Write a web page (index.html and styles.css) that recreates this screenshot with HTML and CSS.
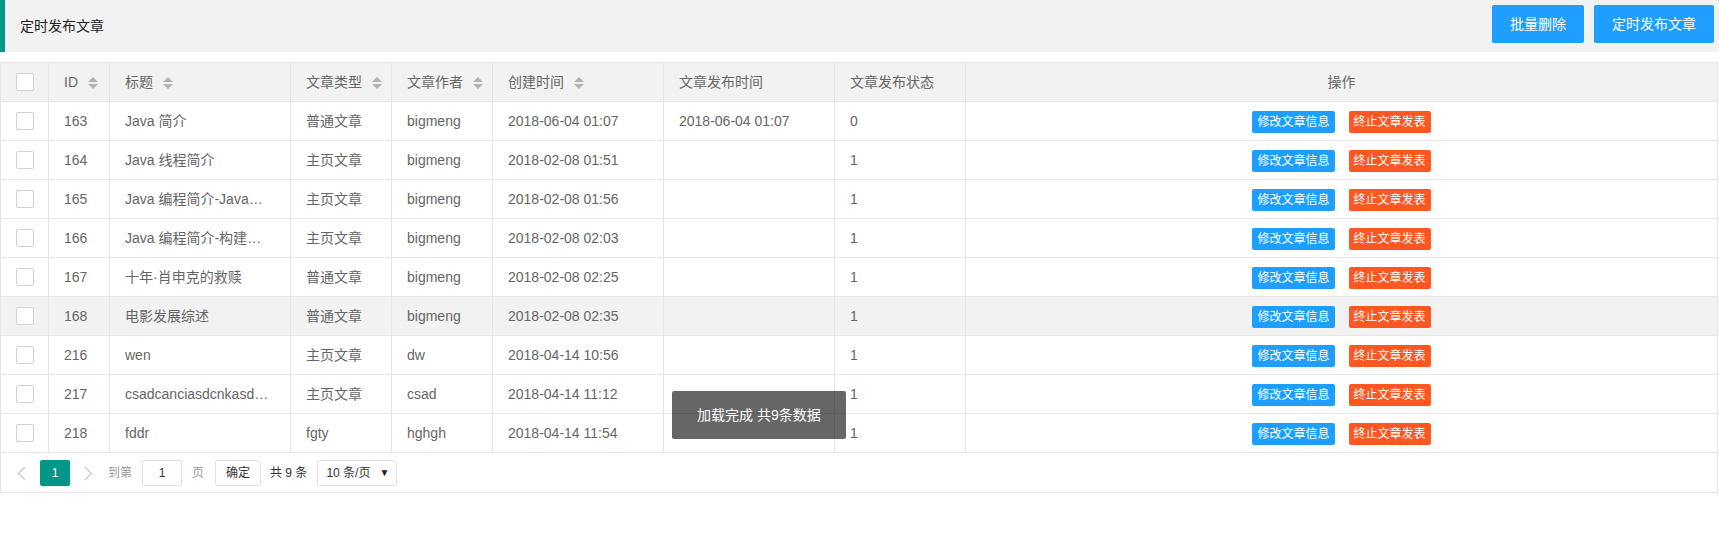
FILE: index.html
```html
<!DOCTYPE html>
<html lang="zh-CN">
<head>
<meta charset="utf-8">
<title>定时发布文章</title>
<link rel="stylesheet" href="styles.css">
</head>
<body>
<div class="quote">
  <div class="quote-title">定时发布文章</div>
  <div class="quote-actions">
    <button class="btn">批量删除</button>
    <button class="btn">定时发布文章</button>
  </div>
</div>

<div class="grid">
  <table>
    <colgroup>
      <col class="c-check"><col class="c-id"><col class="c-title"><col class="c-type"><col class="c-author"><col class="c-created"><col class="c-pub"><col class="c-state"><col>
    </colgroup>
    <thead>
      <tr>
        <th><div class="cell cell-check"><span class="checkbox"></span></div></th>
        <th><div class="cell cell-head">ID<span class="sort"><svg width="10" height="20" viewBox="0 0 10 20"><polygon points="0,10 5,5 10,10" fill="#b2b2b2"/><polygon points="0,12 5,17 10,12" fill="#b2b2b2"/></svg></span></div></th>
        <th><div class="cell cell-head">标题<span class="sort"><svg width="10" height="20" viewBox="0 0 10 20"><polygon points="0,10 5,5 10,10" fill="#b2b2b2"/><polygon points="0,12 5,17 10,12" fill="#b2b2b2"/></svg></span></div></th>
        <th><div class="cell cell-head">文章类型<span class="sort"><svg width="10" height="20" viewBox="0 0 10 20"><polygon points="0,10 5,5 10,10" fill="#b2b2b2"/><polygon points="0,12 5,17 10,12" fill="#b2b2b2"/></svg></span></div></th>
        <th><div class="cell cell-head">文章作者<span class="sort"><svg width="10" height="20" viewBox="0 0 10 20"><polygon points="0,10 5,5 10,10" fill="#b2b2b2"/><polygon points="0,12 5,17 10,12" fill="#b2b2b2"/></svg></span></div></th>
        <th><div class="cell cell-head">创建时间<span class="sort"><svg width="10" height="20" viewBox="0 0 10 20"><polygon points="0,10 5,5 10,10" fill="#b2b2b2"/><polygon points="0,12 5,17 10,12" fill="#b2b2b2"/></svg></span></div></th>
        <th><div class="cell cell-head">文章发布时间</div></th>
        <th><div class="cell cell-head">文章发布状态</div></th>
        <th><div class="cell cell-head cell-center">操作</div></th>
      </tr>
    </thead>
    <tbody>
      <tr>
        <td><div class="cell cell-check"><span class="checkbox"></span></div></td>
        <td><div class="cell">163</div></td>
        <td><div class="cell">Java 简介</div></td>
        <td><div class="cell">普通文章</div></td>
        <td><div class="cell">bigmeng</div></td>
        <td><div class="cell">2018-06-04 01:07</div></td>
        <td><div class="cell">2018-06-04 01:07</div></td>
        <td><div class="cell">0</div></td>
        <td><div class="cell cell-ops"><a class="xbtn xbtn-blue">修改文章信息</a><a class="xbtn xbtn-red">终止文章发表</a></div></td>
      </tr>
      <tr>
        <td><div class="cell cell-check"><span class="checkbox"></span></div></td>
        <td><div class="cell">164</div></td>
        <td><div class="cell">Java 线程简介</div></td>
        <td><div class="cell">主页文章</div></td>
        <td><div class="cell">bigmeng</div></td>
        <td><div class="cell">2018-02-08 01:51</div></td>
        <td><div class="cell"></div></td>
        <td><div class="cell">1</div></td>
        <td><div class="cell cell-ops"><a class="xbtn xbtn-blue">修改文章信息</a><a class="xbtn xbtn-red">终止文章发表</a></div></td>
      </tr>
      <tr>
        <td><div class="cell cell-check"><span class="checkbox"></span></div></td>
        <td><div class="cell">165</div></td>
        <td><div class="cell">Java 编程简介-Java基础</div></td>
        <td><div class="cell">主页文章</div></td>
        <td><div class="cell">bigmeng</div></td>
        <td><div class="cell">2018-02-08 01:56</div></td>
        <td><div class="cell"></div></td>
        <td><div class="cell">1</div></td>
        <td><div class="cell cell-ops"><a class="xbtn xbtn-blue">修改文章信息</a><a class="xbtn xbtn-red">终止文章发表</a></div></td>
      </tr>
      <tr>
        <td><div class="cell cell-check"><span class="checkbox"></span></div></td>
        <td><div class="cell">166</div></td>
        <td><div class="cell">Java 编程简介-构建工具</div></td>
        <td><div class="cell">主页文章</div></td>
        <td><div class="cell">bigmeng</div></td>
        <td><div class="cell">2018-02-08 02:03</div></td>
        <td><div class="cell"></div></td>
        <td><div class="cell">1</div></td>
        <td><div class="cell cell-ops"><a class="xbtn xbtn-blue">修改文章信息</a><a class="xbtn xbtn-red">终止文章发表</a></div></td>
      </tr>
      <tr>
        <td><div class="cell cell-check"><span class="checkbox"></span></div></td>
        <td><div class="cell">167</div></td>
        <td><div class="cell">十年·肖申克的救赎</div></td>
        <td><div class="cell">普通文章</div></td>
        <td><div class="cell">bigmeng</div></td>
        <td><div class="cell">2018-02-08 02:25</div></td>
        <td><div class="cell"></div></td>
        <td><div class="cell">1</div></td>
        <td><div class="cell cell-ops"><a class="xbtn xbtn-blue">修改文章信息</a><a class="xbtn xbtn-red">终止文章发表</a></div></td>
      </tr>
      <tr class="row-hover">
        <td><div class="cell cell-check"><span class="checkbox"></span></div></td>
        <td><div class="cell">168</div></td>
        <td><div class="cell">电影发展综述</div></td>
        <td><div class="cell">普通文章</div></td>
        <td><div class="cell">bigmeng</div></td>
        <td><div class="cell">2018-02-08 02:35</div></td>
        <td><div class="cell"></div></td>
        <td><div class="cell">1</div></td>
        <td><div class="cell cell-ops"><a class="xbtn xbtn-blue">修改文章信息</a><a class="xbtn xbtn-red">终止文章发表</a></div></td>
      </tr>
      <tr>
        <td><div class="cell cell-check"><span class="checkbox"></span></div></td>
        <td><div class="cell">216</div></td>
        <td><div class="cell">wen</div></td>
        <td><div class="cell">主页文章</div></td>
        <td><div class="cell">dw</div></td>
        <td><div class="cell">2018-04-14 10:56</div></td>
        <td><div class="cell"></div></td>
        <td><div class="cell">1</div></td>
        <td><div class="cell cell-ops"><a class="xbtn xbtn-blue">修改文章信息</a><a class="xbtn xbtn-red">终止文章发表</a></div></td>
      </tr>
      <tr>
        <td><div class="cell cell-check"><span class="checkbox"></span></div></td>
        <td><div class="cell">217</div></td>
        <td><div class="cell">csadcanciasdcnkasdnkcas</div></td>
        <td><div class="cell">主页文章</div></td>
        <td><div class="cell">csad</div></td>
        <td><div class="cell">2018-04-14 11:12</div></td>
        <td><div class="cell"></div></td>
        <td><div class="cell">1</div></td>
        <td><div class="cell cell-ops"><a class="xbtn xbtn-blue">修改文章信息</a><a class="xbtn xbtn-red">终止文章发表</a></div></td>
      </tr>
      <tr>
        <td><div class="cell cell-check"><span class="checkbox"></span></div></td>
        <td><div class="cell">218</div></td>
        <td><div class="cell">fddr</div></td>
        <td><div class="cell">fgty</div></td>
        <td><div class="cell">hghgh</div></td>
        <td><div class="cell">2018-04-14 11:54</div></td>
        <td><div class="cell"></div></td>
        <td><div class="cell">1</div></td>
        <td><div class="cell cell-ops"><a class="xbtn xbtn-blue">修改文章信息</a><a class="xbtn xbtn-red">终止文章发表</a></div></td>
      </tr>
    </tbody>
  </table>
  <div class="pager">
    <span class="pg-prev"><svg width="9" height="15" viewBox="0 0 9 15"><polyline points="8,1 1.5,7.5 8,14" fill="none" stroke="#c8c8c8" stroke-width="1.3"/></svg></span>
    <span class="pg-curr">1</span>
    <span class="pg-next"><svg width="9" height="15" viewBox="0 0 9 15"><polyline points="1,1 7.5,7.5 1,14" fill="none" stroke="#c8c8c8" stroke-width="1.3"/></svg></span>
    <span class="pg-label">到第</span>
    <span class="pg-input">1</span>
    <span class="pg-label pg-page">页</span>
    <span class="pg-btn">确定</span>
    <span class="pg-count">共 9 条</span>
    <span class="pg-select">10 条/页<span class="pg-caret">▼</span></span>
  </div>
</div>

<div class="toast">加载完成 共9条数据</div>
</body>
</html>
```

FILE: styles.css
```css
body {
  margin: 0;
  font-family: "Liberation Sans", "Noto Sans CJK SC", sans-serif;
  font-size: 14px;
  color: #666;
  background: #fff;
}

/* Title bar */
.quote {
  display: flex;
  justify-content: space-between;
  height: 52px;
  box-sizing: border-box;
  background: #f2f2f2;
  border-left: 5px solid #009688;
  padding: 0 5px 0 15px;
}
.quote-title {
  padding-top: 15px;
  line-height: 22px;
  color: #222;
}
.quote-actions {
  display: flex;
  gap: 10px;
  padding-top: 5px;
}
.btn {
  height: 38px;
  line-height: 38px;
  padding: 0 18px;
  border: none;
  border-radius: 2px;
  background: #1e9fff;
  color: #fff;
  font-family: inherit;
  font-size: 14px;
}

/* Table */
.grid {
  margin-top: 10px;
  width: 1718px;
  box-sizing: border-box;
  border: 1px solid #e6e6e6;
}
table {
  width: 100%;
  table-layout: fixed;
  border-collapse: separate;
  border-spacing: 0;
}
.c-check { width: 48px; }
.c-id { width: 61px; }
.c-title { width: 181px; }
.c-type { width: 101px; }
.c-author { width: 101px; }
.c-created { width: 171px; }
.c-pub { width: 171px; }
.c-state { width: 131px; }

th, td {
  padding: 0;
  border-right: 1px solid #e6e6e6;
  border-bottom: 1px solid #e6e6e6;
  font-weight: normal;
  text-align: left;
}
th:last-child, td:last-child { border-right: none; }
thead th { background: #f2f2f2; }
.row-hover td { background: #f2f2f2; }

.cell {
  height: 38px;
  box-sizing: border-box;
  padding: 9px 15px;
  line-height: 20px;
  overflow: hidden;
  white-space: nowrap;
  text-overflow: ellipsis;
}
.cell-head {
  overflow: visible;
  text-overflow: clip;
}
.cell-center { text-align: center; }
.cell-check {
  padding: 0;
  display: flex;
  align-items: center;
  justify-content: center;
}
.checkbox {
  width: 16px;
  height: 16px;
  border: 1px solid #d2d2d2;
  border-radius: 2px;
  background: #fff;
}
.sort {
  display: inline-block;
  width: 10px;
  height: 20px;
  margin-left: 10px;
  vertical-align: top;
}
.sort svg { display: block; }

.cell-ops {
  display: flex;
  justify-content: center;
  align-items: center;
  gap: 14px;
  padding: 0 15px;
}
.xbtn {
  height: 22px;
  line-height: 22px;
  padding: 0 5px;
  font-size: 12px;
  color: #fff;
  border-radius: 2px;
  margin-top: 2px;
}
.xbtn-blue { background: #1e9fff; }
.xbtn-red { background: #ff5722; }

/* Pager */
.pager {
  display: flex;
  align-items: flex-start;
  height: 39px;
  box-sizing: border-box;
  padding: 7px 0 0 16px;
  font-size: 12px;
}
.pager > span {
  height: 26px;
  line-height: 26px;
  box-sizing: border-box;
}
.pg-prev, .pg-next {
  display: flex;
  align-items: center;
  width: 9px;
}
.pg-prev { margin-right: 14px; }
.pg-next { margin-left: 14px; margin-right: 15px; }
.pg-curr {
  width: 30px;
  text-align: center;
  background: #009688;
  color: #fff;
  border-radius: 2px;
}
.pg-label { color: #999; }
.pg-input {
  width: 40px;
  margin: 0 10px;
  text-align: center;
  border: 1px solid #e2e2e2;
  border-radius: 2px;
  line-height: 24px !important;
  color: #333;
}
.pg-btn {
  margin-left: 11px;
  width: 46px;
  text-align: center;
  border: 1px solid #e2e2e2;
  border-radius: 2px;
  line-height: 24px !important;
  color: #333;
}
.pg-count {
  margin-left: 9px;
  color: #333;
}
.pg-select {
  margin-left: 10px;
  width: 80px;
  display: flex;
  justify-content: space-between;
  padding: 0 7px 0 8px;
  border: 1px solid #e2e2e2;
  border-radius: 2px;
  line-height: 24px !important;
  color: #333;
}
.pg-caret {
  font-size: 10px;
  color: #222;
}

/* Toast */
.toast {
  position: absolute;
  left: 672px;
  top: 391px;
  padding: 12px 25px;
  line-height: 24px;
  font-size: 14px;
  color: #fff;
  background: rgba(0, 0, 0, 0.6);
  border-radius: 2px;
}
```
